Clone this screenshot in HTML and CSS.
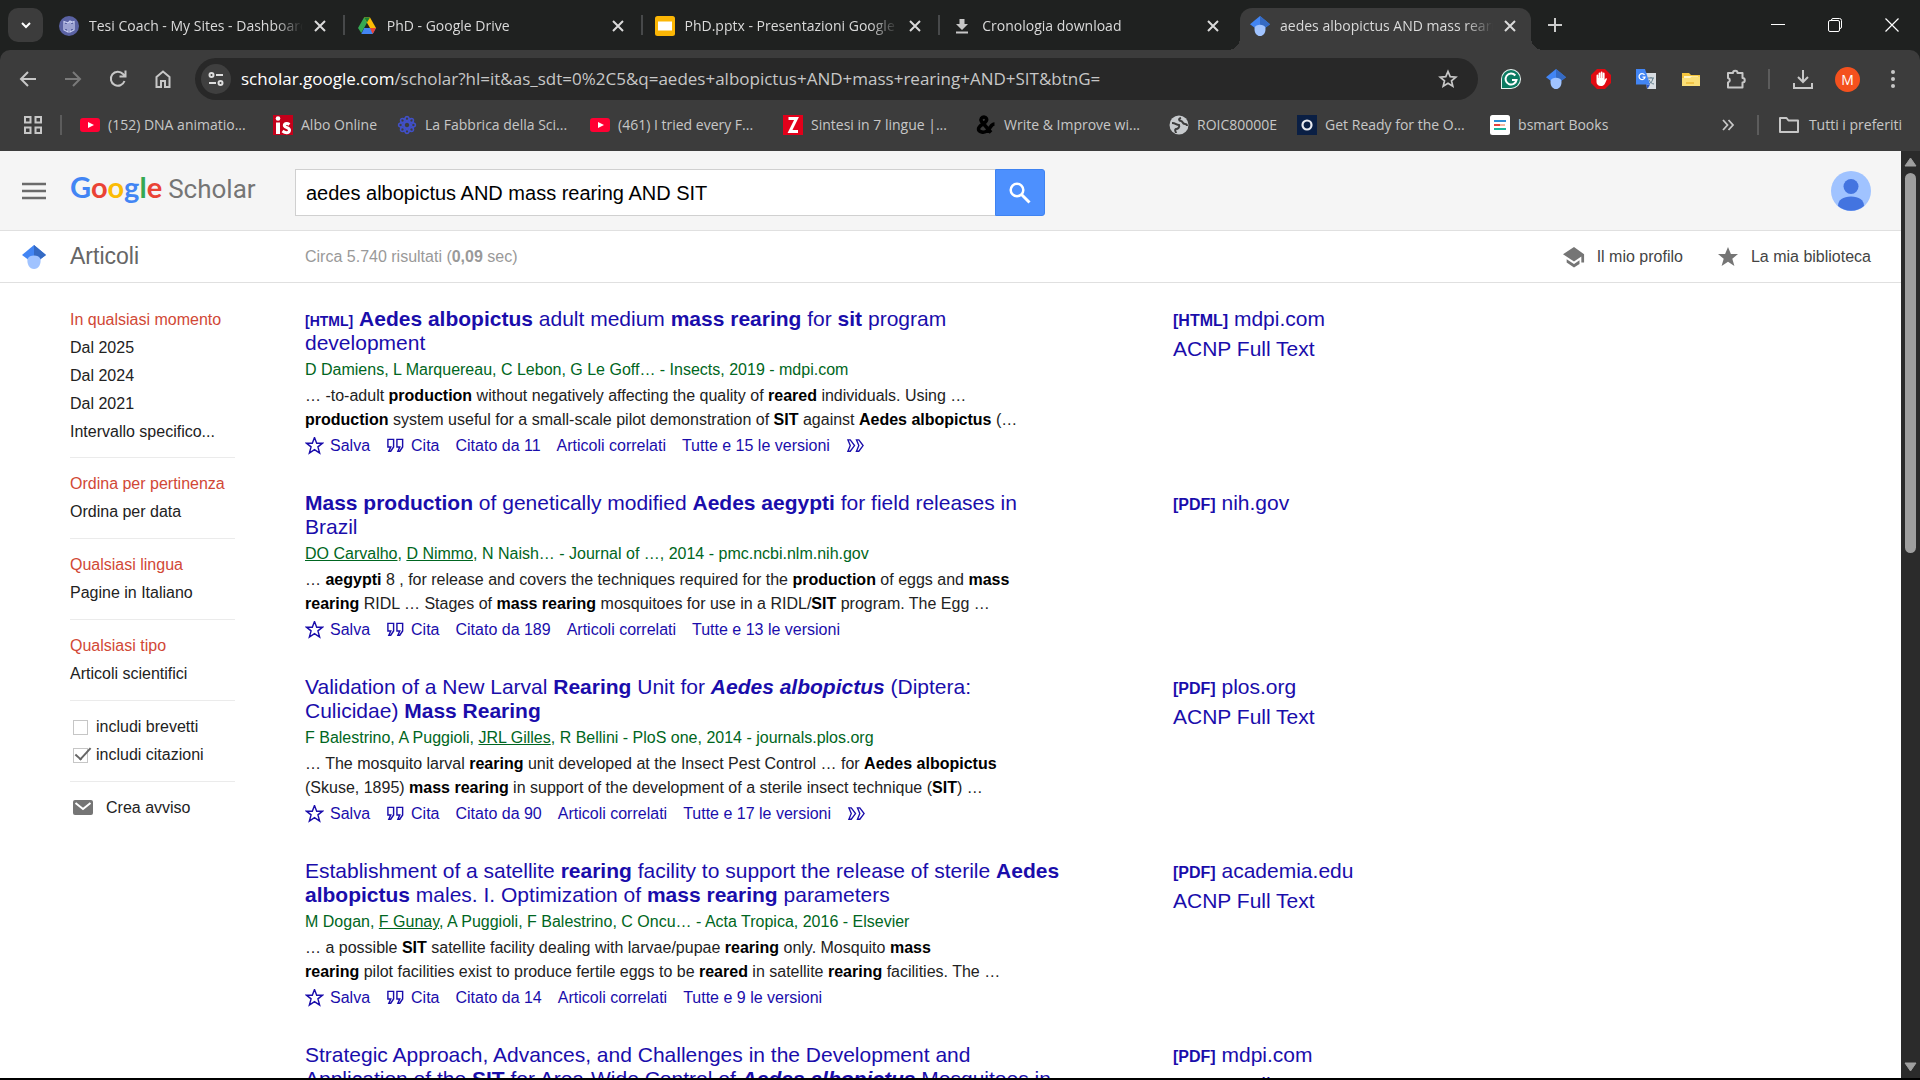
FILE: index.html
```html
<!DOCTYPE html>
<html lang="it">
<head>
<meta charset="utf-8">
<title>aedes albopictus AND mass rearing AND SIT - Google Scholar</title>
<link rel="stylesheet" href="styles.css">
</head>
<body>
<svg class="sprite" aria-hidden="true">
  <symbol id="i-x" viewBox="0 0 14 14"><path d="M2 2l10 10M12 2L2 12" fill="none" stroke="currentColor" stroke-width="2"/></symbol>
  <symbol id="i-yt" viewBox="0 0 20 20"><rect y="3" width="20" height="14" rx="3" fill="#f03"/><path d="M8 7l6 3-6 3z" fill="#fff"/></symbol>
  <symbol id="i-scholar" viewBox="0 0 24 24"><path d="M12 0L0 10l12 9 12-9z" fill="#4285f4"/><path d="M12 0l12 10-6 4.500L12 12z" fill="#356ac3"/><path d="M5.500 14C6.500 11.500 9 10.500 12 10.500s5.500 1 6.500 3.500c.8 5-2 10-6.500 10s-7.300-5-6.500-10z" fill="#a0c3ff"/></symbol>
  <symbol id="i-star" viewBox="0 1 20 20"><path d="M10 1.500l2.300 6h6.200l-4.900 3.900 1.800 6.500L10 14.200l-5.400 3.700 1.800-6.500L1.500 7.500h6.200z" fill="none" stroke="currentColor" stroke-width="1.500"/></symbol>
  <symbol id="i-cite" viewBox="0 0 20 18"><path d="M2 1.500h6v8L5 14H3l2-4.500H2zM11.500 1.500h6v8l-3 4.500h-2l2-4.500h-3z" fill="none" stroke="currentColor" stroke-width="1.500"/></symbol>
  <symbol id="i-more" viewBox="0 0 20 18"><path d="M2 2h2.500L9 8l-4.500 6H2l2.500-6zM11 2h2.500L18 8l-4.500 6H11l2.500-6z" fill="none" stroke="currentColor" stroke-width="1.400"/></symbol>
</svg>

<header class="browser">
  <div class="tabstrip">
    <button class="tab-search" aria-label="Cerca schede"><svg width="14" height="14" viewBox="0 0 14 14"><path d="M3 5l4 4 4-4" fill="none" stroke="#fff" stroke-width="2"/></svg></button>
    <nav class="tabs">
      <div class="tab sep">
        <svg class="fav" viewBox="0 0 20 20"><circle cx="10" cy="10" r="10" fill="#5a62a3"/><path d="M5 5.500l4 1.500v9l-4-2zM15 5.500L11 7v9l4-2zM9 7l2-2 2 1M7 8v5M13 8v5" fill="none" stroke="#c9cff2" stroke-width="1.200"/></svg>
        <span class="tab-title">Tesi Coach - My Sites - Dashboard</span><button class="close" aria-label="Chiudi"><svg><use href="#i-x"/></svg></button>
      </div>
      <div class="tab sep">
        <svg class="fav" viewBox="0 0 20 20"><path d="M7 1.500h6l-3 5.200L4.300 17 1 12z" fill="#34a853"/><path d="M7 1.500h6L19 12h-6z" fill="#fbbc04"/><path d="M7 1.500h6l-3 5z" fill="#188038"/><path d="M7.200 12H19l-3.300 6H4.300z" fill="#4285f4"/><path d="M19 12h-6l2.700 6z" fill="#ea4335"/></svg>
        <span class="tab-title">PhD - Google Drive</span><button class="close" aria-label="Chiudi"><svg><use href="#i-x"/></svg></button>
      </div>
      <div class="tab sep">
        <svg class="fav" viewBox="0 0 20 20"><rect width="20" height="20" rx="2.500" fill="#fbb605"/><rect x="3" y="5.500" width="14" height="9" fill="#fff"/></svg>
        <span class="tab-title">PhD.pptx - Presentazioni Google</span><button class="close" aria-label="Chiudi"><svg><use href="#i-x"/></svg></button>
      </div>
      <div class="tab">
        <svg class="fav" viewBox="0 0 20 20"><path d="M7.500 3h5v5H16l-6 6-6-6h3.500zM4 15.500h12v2H4z" fill="#c7c7c7"/></svg>
        <span class="tab-title">Cronologia download</span><button class="close" aria-label="Chiudi"><svg><use href="#i-x"/></svg></button>
      </div>
      <div class="tab active">
        <svg class="fav"><use href="#i-scholar"/></svg>
        <span class="tab-title">aedes albopictus AND mass rearing</span><button class="close" aria-label="Chiudi"><svg><use href="#i-x"/></svg></button>
      </div>
    </nav>
    <button class="new-tab" aria-label="Nuova scheda"><svg width="14" height="14" viewBox="0 0 14 14"><path d="M7 0v14M0 7h14" stroke="#ccc" stroke-width="2"/></svg></button>
    <div class="window-controls">
      <button aria-label="Riduci"><svg width="14" height="14" viewBox="0 0 14 14"><path d="M0 6.500h14" stroke="#fff"/></svg></button>
      <button aria-label="Ripristina"><svg width="14" height="14" viewBox="0 0 14 14"><path d="M3.500 2.500V2A1.500 1.500 0 0 1 5 .5h6.500a2 2 0 0 1 2 2V9a1.500 1.500 0 0 1-1.500 1.500h-.5" fill="none" stroke="#fff"/><rect x=".5" y="2.500" width="11" height="11" rx="1.500" fill="none" stroke="#fff"/></svg></button>
      <button aria-label="Chiudi finestra"><svg width="14" height="14" viewBox="0 0 14 14"><path d="M.5.500l13 13M13.500.5l-13 13" stroke="#fff" stroke-width="1.200"/></svg></button>
    </div>
  </div>

  <div class="toolbar">
    <button class="tool" aria-label="Indietro"><svg viewBox="0 0 20 20"><path d="M18 10H3M10 3l-7 7 7 7" fill="none" stroke="#c7c7c7" stroke-width="2"/></svg></button>
    <button class="tool" aria-label="Avanti"><svg viewBox="0 0 20 20"><path d="M2 10h15M10 3l7 7-7 7" fill="none" stroke="#7a7a7a" stroke-width="2"/></svg></button>
    <button class="tool" aria-label="Ricarica"><svg viewBox="0 0 20 20"><path d="M16.500 12A7 7 0 1 1 15 5l2 2.500M17.500 1.500v6h-6" fill="none" stroke="#c7c7c7" stroke-width="2"/></svg></button>
    <button class="tool" aria-label="Home"><svg viewBox="0 0 20 20"><path d="M3.500 18V8L10 2.500 16.500 8v10H12v-6H8v6z" fill="none" stroke="#c7c7c7" stroke-width="2"/></svg></button>
    <div class="address">
      <button class="site-info" aria-label="Informazioni sul sito"><svg width="16" height="16" viewBox="0 0 16 16"><g fill="none" stroke="#ddd" stroke-width="2"><circle cx="3.500" cy="4" r="2"/><path d="M8 4h7M1 12h7"/><circle cx="12.500" cy="12" r="2"/></g></svg></button>
      <div class="url"><span class="host">scholar.google.com</span>/scholar?hl=it&amp;as_sdt=0%2C5&amp;q=aedes+albopictus+AND+mass+rearing+AND+SIT&amp;btnG=</div>
      <button class="bookmark-star" aria-label="Aggiungi ai preferiti"><svg width="20" height="20" viewBox="0 0 20 20"><path d="M10 2.500l2.200 5.200 5.600.4-4.300 3.700 1.300 5.500L10 14.300l-4.800 3 1.300-5.500L2.200 8.100l5.600-.4z" fill="none" stroke="#c7c7c7" stroke-width="1.700"/></svg></button>
    </div>
    <button class="tool" aria-label="Grammarly"><svg viewBox="0 0 20 20"><path d="M10 0a10 10 0 0 1 0 20H0V10A10 10 0 0 1 10 0z" fill="#e8f5f1"/><path d="M10 1a9 9 0 0 1 0 18H1v-9a9 9 0 0 1 9-9z" fill="#0b7a61"/><path d="M14.300 6.500A5.500 5.500 0 1 0 15.500 11H11" fill="none" stroke="#fff" stroke-width="2"/></svg></button>
    <button class="tool" aria-label="Google Scholar"><svg><use href="#i-scholar"/></svg></button>
    <button class="tool" aria-label="Blocco annunci"><svg viewBox="0 0 20 20"><path d="M6 0h8l6 6v8l-6 6H6l-6-6V6z" fill="#e00a12"/><path d="M5.500 10V6.500a.9.9 0 0 1 1.800 0V9h.3V4.300a.9.900 0 0 1 1.800 0V9h.3V3.500a.9.900 0 0 1 1.800 0V9h.3V4.500a.9.900 0 0 1 1.800 0V11l1-1.500c.8-.8 1.700 0 1.300.8L14 14.500C13 16.500 11.500 17 10 17c-3 0-4.500-2-4.500-4z" fill="#fff"/></svg></button>
    <button class="tool" aria-label="Traduttore"><svg viewBox="0 0 20 20"><path d="M9 4h11v16H11z" fill="#d8dde2"/><path d="M12 9h6M15 8v1M17 9c-.5 3-2 5-4 6M13 11c1 2 3 4 5 4" fill="none" stroke="#607d8b"/><path d="M10 15.500h4L11.500 20z" fill="#2a56c6"/><path d="M0 0h9l5 15.500H0z" fill="#4285f4"/><path d="M8.500 5.800A3 3 0 1 0 9 8.200H6.500" fill="none" stroke="#fff" stroke-width="1.300"/></svg></button>
    <button class="tool" aria-label="Cartella"><svg viewBox="0 0 20 20"><path d="M1 4h7l2 2h9v11H1z" fill="#f5c53d"/><path d="M3 7h14v9H3z" fill="#fff3c4"/><path d="M1 9h8l2-1.500h8V17H1z" fill="#fbdf77"/><path d="M5 14h8" stroke="#e6a817"/></svg></button>
    <button class="tool" aria-label="Estensioni"><svg viewBox="0 0 20 20"><path d="M2 4h5a2 2 0 0 1 4.500 0h5v5a2 2 0 0 1 0 4.500v5H2v-5a2.300 2.300 0 0 0 0-4.500z" fill="none" stroke="#c7c7c7" stroke-width="2" stroke-linejoin="round"/></svg></button>
    <span class="divider"></span>
    <button class="tool" aria-label="Download"><svg viewBox="0 0 20 20"><path d="M10 1v12M5 8l5 5 5-5M1 14v5h18v-5" fill="none" stroke="#c7c7c7" stroke-width="2"/></svg></button>
    <button class="tool" aria-label="Profilo"><span class="profile">M</span></button>
    <button class="tool" aria-label="Menu"><svg viewBox="0 0 20 20"><g fill="#c7c7c7"><circle cx="10" cy="3" r="2"/><circle cx="10" cy="10" r="2"/><circle cx="10" cy="17" r="2"/></g></svg></button>
  </div>

  <nav class="bookmarks">
    <button class="apps" aria-label="App"><svg width="18" height="18" viewBox="0 0 18 18"><path d="M1 1h5.500v5.500H1zM11.500 1H17v5.500h-5.500zM1 11.500h5.500V17H1zM11.500 11.500H17V17h-5.500z" fill="none" stroke="#c7c7c7" stroke-width="2"/></svg></button>
    <span class="divider"></span>
    <a class="bm wide" href="#"><svg><use href="#i-yt"/></svg>(152) DNA animatio...</a>
    <a class="bm" href="#"><svg viewBox="0 0 20 20"><rect width="20" height="20" fill="#c4001a"/><circle cx="5" cy="3.500" r="2.300" fill="#fff"/><path d="M3 7.500h4V19H3z" fill="#fff"/><path d="M16.500 9.500c-3-2-6-.5-5 1.500s5.500 1.500 5 4.500-4.500 2.500-7 .5" fill="none" stroke="#fff" stroke-width="3"/></svg>Albo Online</a>
    <a class="bm wide" href="#"><svg viewBox="0 0 20 20"><g fill="none" stroke="#4150c8" stroke-width="1.500"><ellipse cx="10" cy="10" rx="3" ry="8.500"/><ellipse cx="10" cy="10" rx="8.500" ry="3"/><ellipse cx="10" cy="10" rx="3" ry="8.500" transform="rotate(45 10 10)"/><ellipse cx="10" cy="10" rx="3" ry="8.500" transform="rotate(-45 10 10)"/></g></svg>La Fabbrica della Sci...</a>
    <a class="bm wide" href="#"><svg><use href="#i-yt"/></svg>(461) I tried every F...</a>
    <a class="bm wide" href="#"><svg viewBox="0 0 20 20"><rect width="20" height="20" fill="#e2001a"/><path d="M5.500 3.500h8L7 16.500h8" fill="none" stroke="#fff" stroke-width="3"/></svg>Sintesi in 7 lingue |...</a>
    <a class="bm wide" href="#"><svg viewBox="0 0 20 20"><path d="M15 17.500L5.500 6.500C4 4 6 2 8 2s4 2.500 1.500 5S2.500 11 2.500 14s5.500 4.500 9 1.500S15 9 18.500 9" fill="none" stroke="#000" stroke-width="3.500"/></svg>Write &amp; Improve wi...</a>
    <a class="bm" href="#"><svg viewBox="0 0 20 20"><circle cx="10" cy="10" r="9.500" fill="#c7cacd"/><path d="M3 8c4 0 4 2 7 2 1 2-1 4-3 4-2 1 0 3 0 4M12 3c-3 1-2 3 0 3s1 3 4 3c1 0 2 1 2 2" fill="none" stroke="#3c3c3c" stroke-width="2"/></svg>ROIC80000E</a>
    <a class="bm wide" href="#"><svg viewBox="0 0 20 20"><rect width="20" height="20" fill="#0a1f44"/><circle cx="10" cy="10" r="4.500" fill="none" stroke="#e8eaf0" stroke-width="2.200"/></svg>Get Ready for the O...</a>
    <a class="bm" href="#"><svg viewBox="0 0 20 20"><rect width="20" height="20" rx="2.500" fill="#fff"/><path d="M4 6h12" stroke="#2d8fd5" stroke-width="2"/><path d="M4 10h6" stroke="#e8413b" stroke-width="2"/><path d="M10 10h5" stroke="#f4b8a0" stroke-width="2"/><path d="M4 14h12" stroke="#19b59a" stroke-width="2"/></svg>bsmart Books</a>
    <button class="overflow" aria-label="Altri preferiti"><svg width="14" height="14" viewBox="0 0 14 14"><path d="M2 2l4.500 5L2 12M7.500 2L12 7l-4.500 5" fill="none" stroke="#c7c7c7" stroke-width="1.800"/></svg></button>
    <span class="divider"></span>
    <a class="bm all" href="#"><svg viewBox="0 0 20 20"><path d="M1 3h6.500l2 2.500H19V17H1z" fill="none" stroke="#c7c7c7" stroke-width="2" stroke-linejoin="round"/></svg>Tutti i preferiti</a>
  </nav>
</header>

<div class="viewport">
<div class="page">
  <header class="gs-header">
    <button class="menu" aria-label="Menu principale"><svg width="24" height="18" viewBox="0 0 24 18"><path d="M0 2h24M0 9h24M0 16h24" stroke="#6b6b6b" stroke-width="2.600"/></svg></button>
    <a class="logo" href="#" aria-label="Google Scholar"><span class="google"><span class="b">G</span><span class="r">o</span><span class="y">o</span><span class="b">g</span><span class="g">l</span><span class="r">e</span></span><span class="scholar">Scholar</span></a>
    <form class="search">
      <input type="text" aria-label="Cerca" value="aedes albopictus AND mass rearing AND SIT">
      <button type="button" aria-label="Cerca"><svg width="24" height="24" viewBox="0 0 24 24"><circle cx="9" cy="9" r="6.300" fill="none" stroke="#fff" stroke-width="2.500"/><path d="M13.500 13.500l8 8" stroke="#fff" stroke-width="3"/></svg></button>
    </form>
    <button class="avatar" aria-label="Account"><svg width="40" height="40" viewBox="0 0 40 40"><circle cx="20" cy="20" r="20" fill="#a0c3ff"/><circle cx="20" cy="15.500" r="7.500" fill="#4374e0"/><path d="M7 35c0-6 5-9.500 13-9.500S33 29 33 35a20 20 0 0 1-26 0z" fill="#4374e0"/></svg></button>
  </header>

  <div class="gs-sub">
    <svg class="sub-icon"><use href="#i-scholar"/></svg>
    <h1>Articoli</h1>
    <p class="count">Circa 5.740 risultati (<b>0,09</b> sec)</p>
    <a class="sub-link" href="#"><svg width="22" height="22" viewBox="0 0 24 24"><path d="M12 1L0 9l12 8 8-5.500V18h3V9zM4 14.500v3.500l8 5.500 6-4v-4l-6 4z" fill="#757575"/></svg>Il mio profilo</a>
    <a class="sub-link" href="#"><svg width="22" height="22" viewBox="0 0 22 22"><path d="M11 1l2.900 7H21l-5.700 4.700L17.400 20 11 15.800 4.600 20l2.100-7.300L1 8h7.100z" fill="#757575"/></svg>La mia biblioteca</a>
  </div>

  <div class="gs-body">
    <aside class="filters">
      <ul><li><a class="on" href="#">In qualsiasi momento</a></li><li><a href="#">Dal 2025</a></li><li><a href="#">Dal 2024</a></li><li><a href="#">Dal 2021</a></li><li><a href="#">Intervallo specifico...</a></li></ul>
      <ul><li><a class="on" href="#">Ordina per pertinenza</a></li><li><a href="#">Ordina per data</a></li></ul>
      <ul><li><a class="on" href="#">Qualsiasi lingua</a></li><li><a href="#">Pagine in Italiano</a></li></ul>
      <ul><li><a class="on" href="#">Qualsiasi tipo</a></li><li><a href="#">Articoli scientifici</a></li></ul>
      <ul><li><label><input type="checkbox">includi brevetti</label></li><li><label><input type="checkbox" checked>includi citazioni</label></li></ul>
      <ul><li><a class="alert" href="#"><svg width="20" height="16" viewBox="0 0 20 16"><rect width="20" height="15" rx="2" fill="#757575"/><path d="M2.500 3l7.500 6 7.500-6" fill="none" stroke="#fff" stroke-width="2"/></svg>Crea avviso</a></li></ul>
    </aside>

    <main class="results">
      <article>
        <div class="entry">
          <h3><span class="tag">[HTML]</span> <a href="#"><b>Aedes albopictus</b> adult medium <b>mass rearing</b> for <b>sit</b> program development</a></h3>
          <p class="by">D Damiens, L Marquereau, C Lebon, G Le Goff… - Insects, 2019 - mdpi.com</p>
          <p class="snip">… -to-adult <b>production</b> without negatively affecting the quality of <b>reared</b> individuals. Using …<br><b>production</b> system useful for a small-scale pilot demonstration of <b>SIT</b> against <b>Aedes albopictus</b> (…</p>
          <div class="actions"><a href="#"><svg><use href="#i-star"/></svg>Salva</a><a href="#"><svg><use href="#i-cite"/></svg>Cita</a><a href="#">Citato da 11</a><a href="#">Articoli correlati</a><a href="#">Tutte e 15 le versioni</a><a href="#" aria-label="Altro"><svg><use href="#i-more"/></svg></a></div>
        </div>
        <div class="links"><a href="#"><span class="tag">[HTML]</span> mdpi.com</a><a href="#">ACNP Full Text</a></div>
      </article>
      <article>
        <div class="entry">
          <h3><a href="#"><b>Mass production</b> of genetically modified <b>Aedes aegypti</b> for field releases in Brazil</a></h3>
          <p class="by"><a href="#">DO Carvalho</a>, <a href="#">D Nimmo</a>, N Naish… - Journal of …, 2014 - pmc.ncbi.nlm.nih.gov</p>
          <p class="snip">… <b>aegypti</b> 8 , for release and covers the techniques required for the <b>production</b> of eggs and <b>mass</b><br><b>rearing</b> RIDL … Stages of <b>mass rearing</b> mosquitoes for use in a RIDL/<b>SIT</b> program. The Egg …</p>
          <div class="actions"><a href="#"><svg><use href="#i-star"/></svg>Salva</a><a href="#"><svg><use href="#i-cite"/></svg>Cita</a><a href="#">Citato da 189</a><a href="#">Articoli correlati</a><a href="#">Tutte e 13 le versioni</a></div>
        </div>
        <div class="links"><a href="#"><span class="tag">[PDF]</span> nih.gov</a></div>
      </article>
      <article>
        <div class="entry">
          <h3><a href="#">Validation of a New Larval <b>Rearing</b> Unit for <b><i>Aedes albopictus</i></b> (Diptera: Culicidae) <b>Mass Rearing</b></a></h3>
          <p class="by">F Balestrino, A Puggioli, <a href="#">JRL Gilles</a>, R Bellini - PloS one, 2014 - journals.plos.org</p>
          <p class="snip">… The mosquito larval <b>rearing</b> unit developed at the Insect Pest Control … for <b>Aedes albopictus</b><br>(Skuse, 1895) <b>mass rearing</b> in support of the development of a sterile insect technique (<b>SIT</b>) …</p>
          <div class="actions"><a href="#"><svg><use href="#i-star"/></svg>Salva</a><a href="#"><svg><use href="#i-cite"/></svg>Cita</a><a href="#">Citato da 90</a><a href="#">Articoli correlati</a><a href="#">Tutte e 17 le versioni</a><a href="#" aria-label="Altro"><svg><use href="#i-more"/></svg></a></div>
        </div>
        <div class="links"><a href="#"><span class="tag">[PDF]</span> plos.org</a><a href="#">ACNP Full Text</a></div>
      </article>
      <article>
        <div class="entry">
          <h3><a href="#">Establishment of a satellite <b>rearing</b> facility to support the release of sterile <b>Aedes albopictus</b> males. I. Optimization of <b>mass rearing</b> parameters</a></h3>
          <p class="by">M Dogan, <a href="#">F Gunay</a>, A Puggioli, F Balestrino, C Oncu… - Acta Tropica, 2016 - Elsevier</p>
          <p class="snip">… a possible <b>SIT</b> satellite facility dealing with larvae/pupae <b>rearing</b> only. Mosquito <b>mass</b><br><b>rearing</b> pilot facilities exist to produce fertile eggs to be <b>reared</b> in satellite <b>rearing</b> facilities. The …</p>
          <div class="actions"><a href="#"><svg><use href="#i-star"/></svg>Salva</a><a href="#"><svg><use href="#i-cite"/></svg>Cita</a><a href="#">Citato da 14</a><a href="#">Articoli correlati</a><a href="#">Tutte e 9 le versioni</a></div>
        </div>
        <div class="links"><a href="#"><span class="tag">[PDF]</span> academia.edu</a><a href="#">ACNP Full Text</a></div>
      </article>
      <article>
        <div class="entry">
          <h3><a href="#">Strategic Approach, Advances, and Challenges in the Development and Application of the <b>SIT</b> for Area-Wide Control of <b><i>Aedes albopictus</i></b> Mosquitoes in</a></h3>
        </div>
        <div class="links"><a href="#"><span class="tag">[PDF]</span> mdpi.com</a><a href="#">ACNP Full Text</a></div>
      </article>
    </main>
  </div>
</div>
<div class="scrollbar" aria-hidden="true">
  <svg width="13" height="10" viewBox="0 0 13 10"><path d="M6.500 1L12 9H1z" fill="#9f9f9f" stroke="#9f9f9f" stroke-linejoin="round"/></svg>
  <div class="track"><div class="thumb"></div></div>
  <svg width="13" height="10" viewBox="0 0 13 10"><path d="M6.500 9L12 1H1z" fill="#9f9f9f" stroke="#9f9f9f" stroke-linejoin="round"/></svg>
</div>
</div>
</body>
</html>
```
FILE: styles.css
```css
* { box-sizing: border-box; }
body {
  margin: 0;
  height: 100vh;
  display: flex;
  flex-direction: column;
  overflow: hidden;
  border-bottom: 2px solid #000;
  background: #fff;
  font: 16px/24px "Liberation Sans", Arial, sans-serif;
  color: #222;
}
button { padding: 0; border: 0; background: none; font: inherit; color: inherit; display: grid; place-items: center; flex: none; }
a { color: inherit; text-decoration: none; }
h1, h3, p, ul { margin: 0; padding: 0; font-weight: normal; }
ul { list-style: none; }
svg { flex: none; }
.sprite { display: none; }

/* Browser frame */
.browser {
  flex: none;
  background: #1f2120;
  color: #dadada;
  font: 14px/20px "Open Sans", "Noto Sans", sans-serif;
}
.tabstrip { display: flex; align-items: center; height: 50px; padding-left: 8px; }
.tab-search { width: 35px; height: 34px; border-radius: 10px; background: #3c3c3c; margin-right: 6px; }
.tabs { display: flex; flex: 0 1 1482px; align-self: stretch; min-width: 0; }
.tab {
  position: relative;
  flex: 1 1 0;
  min-width: 0;
  display: flex;
  align-items: center;
  gap: 10px;
  padding: 2px 20px 0 10px;
}
.tab.active { margin-top: 8px; padding-top: 0; padding-bottom: 6px; flex: 0 1 291px; padding-right: 14px; background: #3c3c3c; border-radius: 12px 12px 0 0; }
.tab.active::before, .tab.active::after { content: ""; position: absolute; bottom: 0; width: 12px; height: 12px; }
.tab.active::before { right: 100%; background: radial-gradient(circle at 0 0, transparent 12px, #3c3c3c 12px); }
.tab.active::after { left: 100%; background: radial-gradient(circle at 100% 0, transparent 12px, #3c3c3c 12px); }
.tab.sep::after { content: ""; position: absolute; right: 2px; top: 15px; width: 2px; height: 20px; background: #47494a; }
.fav { width: 20px; height: 20px; }
.tab-title {
  flex: 1;
  min-width: 0;
  overflow: hidden;
  white-space: nowrap;
  -webkit-mask-image: linear-gradient(to left, transparent, #000 28px);
  mask-image: linear-gradient(to left, transparent, #000 28px);
}
.close svg { width: 14px; height: 14px; }
.new-tab { width: 48px; }
.window-controls { display: flex; margin-left: auto; }
.window-controls button { width: 57px; height: 50px; }

.toolbar {
  display: flex;
  align-items: center;
  height: 58px;
  padding: 0 5px;
  background: #3c3c3c;
  border-radius: 10px 10px 0 0;
}
.tool { width: 45px; height: 45px; }
.tool svg { width: 20px; height: 20px; }
.address {
  flex: 1;
  min-width: 0;
  display: flex;
  align-items: center;
  height: 42px;
  margin: 0 10px;
  padding: 0 20px 0 6px;
  border-radius: 21px;
  background: #282828;
}
.site-info { width: 30px; height: 30px; border-radius: 50%; background: #3f3f3f; }
.url { flex: 1; min-width: 0; margin: 0 10px; overflow: hidden; white-space: nowrap; font-size: 17px; line-height: 24px; color: #c7c7c7; }
.host { color: #fff; }
.profile { width: 25px; height: 25px; border-radius: 50%; background: #f4511e; color: #fff; line-height: 25px; text-align: center; }
.divider { flex: none; width: 2px; height: 20px; margin: 0 10px; background: #5c5c5c; }

.bookmarks { display: flex; align-items: center; height: 43px; padding: 0 18px 10px 24px; background: #3c3c3c; color: #c7c7c7; }
.bookmarks .divider { margin: 0 18px; }
.bookmarks .overflow + .divider { margin: 0 20px 0 22px; }
.bm { display: flex; align-items: center; gap: 8px; flex: none; margin-right: 20px; white-space: nowrap; }
.bm.wide { width: 193px; margin-right: 0; }
.bm.all { margin: 0; gap: 10px; }
.bm svg { width: 20px; height: 20px; }
.overflow { margin-left: auto; }

/* Page */
.viewport { flex: 1; min-height: 0; display: flex; }
.page { flex: 1; min-width: 0; overflow: hidden; }
.gs-header { display: flex; align-items: center; height: 80px; padding: 0 30px 0 22px; background: #f5f5f5; border-bottom: 1px solid #e0e0e0; }
.menu { width: 24px; margin-right: 24px; }
.logo { display: flex; align-items: baseline; gap: 6px; flex: none; width: 225px; margin-bottom: 6px; font: 29px/40px Lato, sans-serif; }
.google { font-weight: bold; }
.b { color: #4285f4; } .r { color: #ea4335; } .y { color: #fbbc05; } .g { color: #34a853; }
.scholar { font: 26px/40px Roboto, sans-serif; color: #757575; }
.search { display: flex; flex: 0 1 750px; height: 47px; margin-top: 4px; margin-right: auto; }
.search input { flex: 1; min-width: 0; padding: 0 10px; border: 1px solid #d0d0d0; border-right: 0; background: #fff; font: 20px/24px "Liberation Sans", Arial, sans-serif; color: #000; }
.search button { width: 50px; height: auto; background: #4d90fe; border: 1px solid #3f83f1; border-radius: 0 3px 3px 0; }
.avatar { border-radius: 50%; }

.gs-sub { display: flex; align-items: center; height: 52px; padding: 0 30px 0 22px; border-bottom: 1px solid #e0e0e0; color: #444; }
.sub-icon { width: 24px; height: 24px; margin-right: 24px; }
.gs-sub h1 { width: 235px; padding-bottom: 2px; font-size: 23px; line-height: 32px; color: #666; }
.count { margin-right: auto; color: #999; }
.sub-link { display: flex; align-items: center; gap: 12px; margin-left: 34px; }

.gs-body { display: flex; padding: 21px 0 0 70px; }
.filters { flex: none; width: 165px; margin-right: 70px; padding-top: 2px; color: #222; white-space: nowrap; }
.filters ul { padding: 12px 0; border-bottom: 1px solid #ebebeb; }
.filters ul:first-child { padding: 0 0 11px; }
.filters ul:last-child { border: 0; }
.filters li { line-height: 28px; }
.on { color: #d14836; }
.filters label { display: flex; align-items: center; gap: 8px; padding-left: 3px; }
.filters input { position: relative; appearance: none; width: 15px; height: 15px; margin: 0; border: 1px solid #c6c6c6; background: #fff; }
.filters input:checked::after { content: ""; position: absolute; left: 5px; top: -5px; width: 6px; height: 14px; border: solid #666; border-width: 0 2px 2px 0; transform: rotate(42deg); }
.alert { display: flex; align-items: center; gap: 13px; padding-left: 3px; }

.results { flex: 1; min-width: 0; }
article { display: flex; padding-bottom: 30px; }
.entry { flex: 0 1 775px; padding-top: 3px; }
h3 { max-width: 760px; font-size: 21px; line-height: 24px; color: #1a0dab; }
.tag { font-weight: bold; font-size: 16px; line-height: 16px; }
h3 .tag { font-size: 14px; }
.by { margin-top: 3px; color: #006621; }
.by a { text-decoration: underline; }
.snip { margin-top: 2px; white-space: nowrap; }
.snip b { color: #000; }
.actions { display: flex; gap: 16px; margin-top: 2px; color: #1a0dab; white-space: nowrap; }
.actions a { display: flex; align-items: center; gap: 6px; }
.actions svg { width: 19px; height: 19px; }
.links { margin-left: 93px; font-size: 21px; line-height: 30px; color: #1a0dab; }
.links a { display: block; }

.scrollbar { flex: none; width: 19px; display: flex; flex-direction: column; align-items: center; gap: 6px; padding: 6px 0; background: #2b2b2b; }
.scrollbar svg { margin: 0 auto; }
.track { flex: 1; width: 11px; }
.thumb { height: 43%; border-radius: 6px; background: #9f9f9f; }
```
